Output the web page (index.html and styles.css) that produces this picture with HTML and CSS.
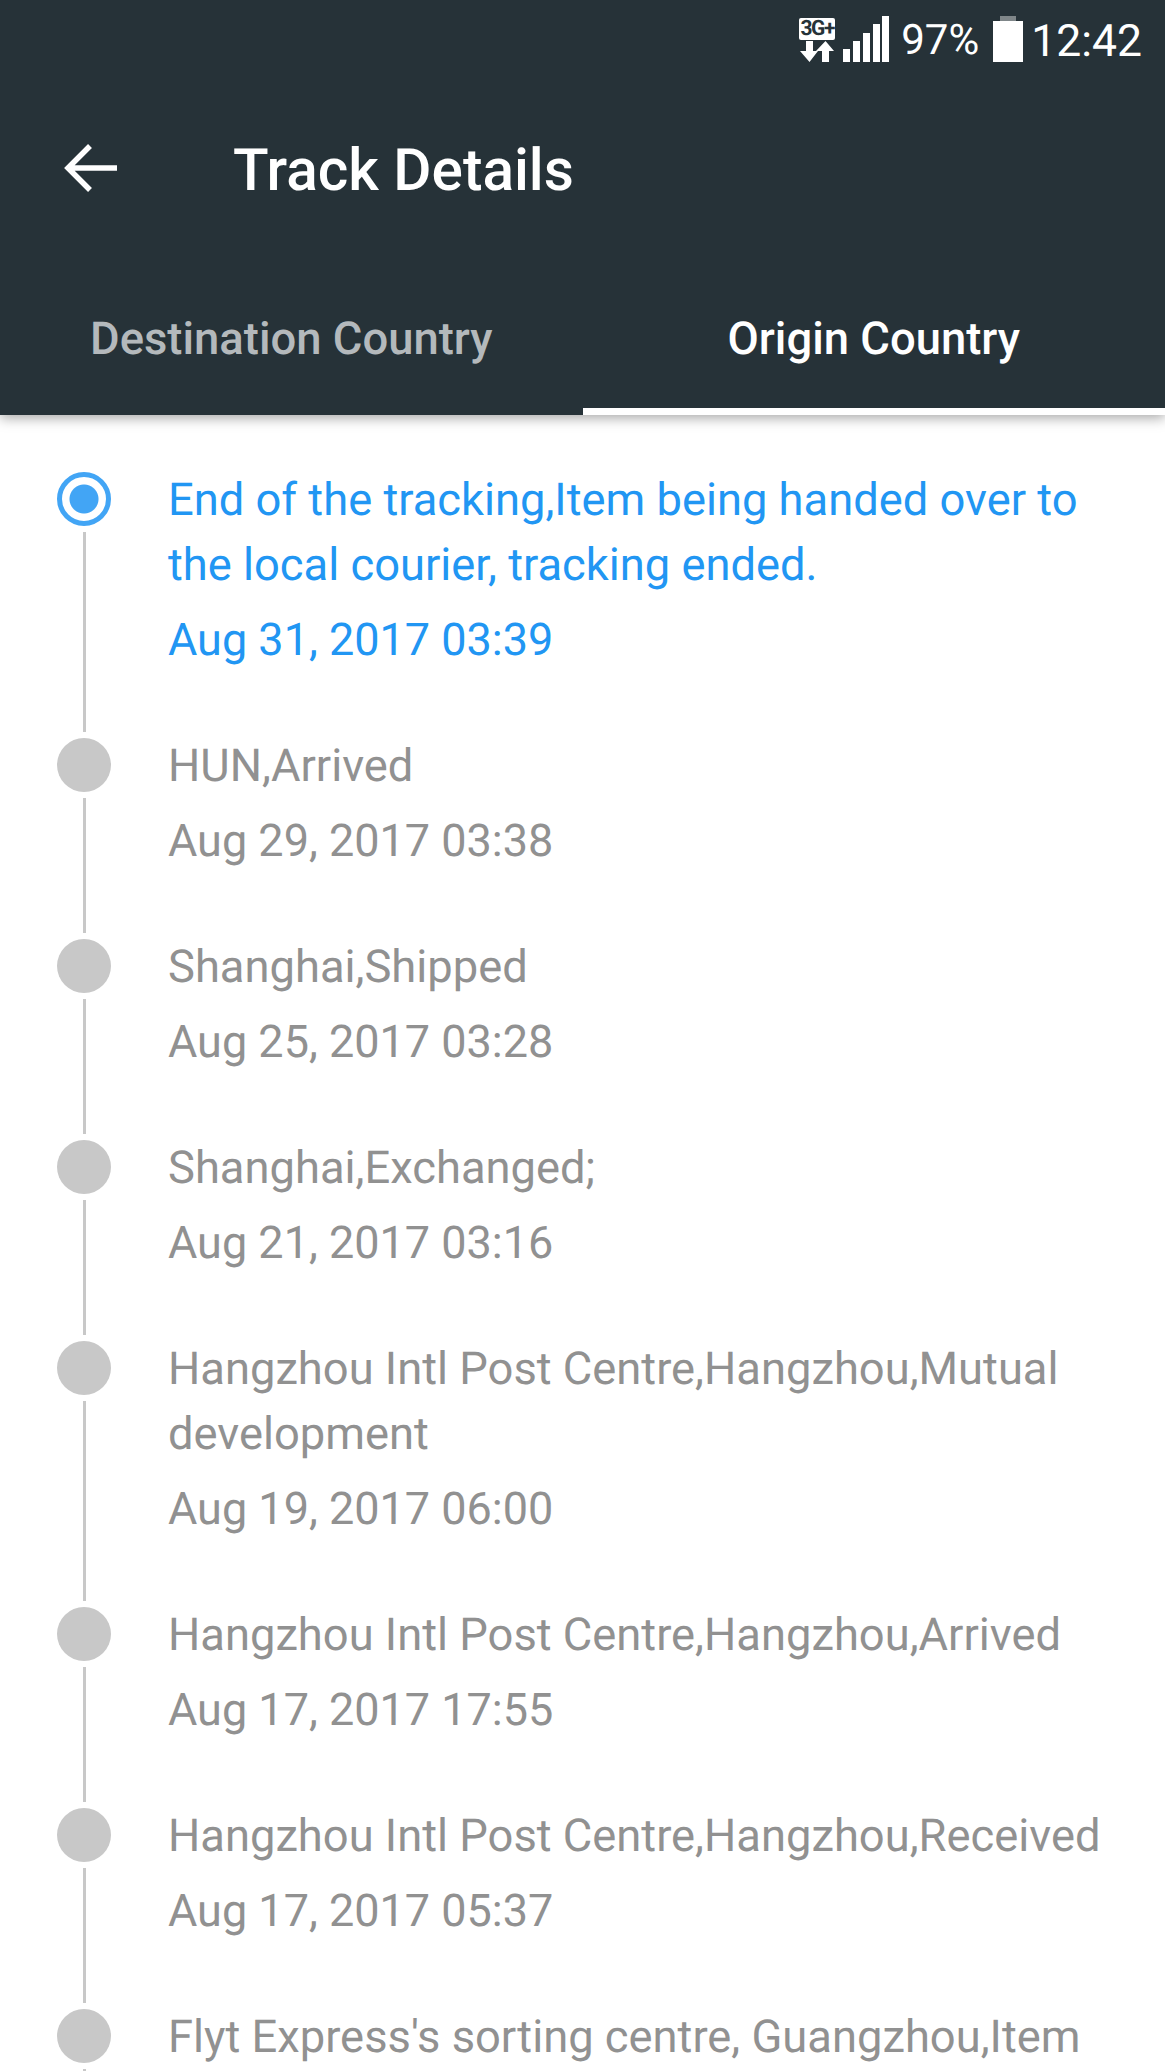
FILE: index.html
```html
<!doctype html>
<html>
  <head>
    <meta charset="UTF-8" />
    <link rel="stylesheet" href="styles.css">
  </head>
  <body>
    <div class="screen">
      <div class="header">
        <div class="status-bar">
          <div class="net-icon">
            <span class="net-badge">3G+</span>
            <svg width="34" height="21" viewBox="0 0 34 21">
              <path d="M6 0h7v10h5L9.500 21 0 10h6z" fill="#fff" />
              <path d="M22 21h7V10h5L25.500 0 16 10h6z" fill="#fff" />
            </svg>
          </div>
          <svg class="signal" width="46" height="46" viewBox="0 0 46 46">
            <rect x="0" y="33" width="7" height="13" fill="#fff" />
            <rect x="10" y="25" width="7" height="21" fill="#fff" />
            <rect x="20" y="17" width="7" height="29" fill="#fff" />
            <rect x="30" y="8" width="7" height="38" fill="#fff" />
            <rect x="39" y="0" width="7" height="46" fill="#fff" />
          </svg>
          <span class="battery-text">97%</span>
          <svg class="battery" width="30" height="46" viewBox="0 0 30 46">
            <rect x="7" y="0" width="16" height="6" fill="#7f8689" />
            <rect x="0" y="5" width="30" height="41" fill="#fff" />
          </svg>
          <span class="clock">12:42</span>
        </div>
        <div class="toolbar">
          <svg class="back" width="54" height="50" viewBox="0 0 54 50">
            <path d="M53 25H5M26 3L4 25 26 47" fill="none" stroke="#fff" stroke-width="5.500" />
          </svg>
          <div class="title">Track Details</div>
        </div>
        <div class="tabs">
          <div class="tab">Destination Country</div>
          <div class="tab active">Origin Country</div>
        </div>
      </div>

      <div class="timeline">
        <div class="row current">
          <div class="rail">
            <div class="dot"></div>
            <div class="line"></div>
          </div>
          <div class="info">
            <div class="what">End of the tracking,Item being handed over to the local courier, tracking ended.</div>
            <div class="when">Aug 31, 2017 03:39</div>
          </div>
        </div>
        <div class="row">
          <div class="rail">
            <div class="dot"></div>
            <div class="line"></div>
          </div>
          <div class="info">
            <div class="what">HUN,Arrived</div>
            <div class="when">Aug 29, 2017 03:38</div>
          </div>
        </div>
        <div class="row">
          <div class="rail">
            <div class="dot"></div>
            <div class="line"></div>
          </div>
          <div class="info">
            <div class="what">Shanghai,Shipped</div>
            <div class="when">Aug 25, 2017 03:28</div>
          </div>
        </div>
        <div class="row">
          <div class="rail">
            <div class="dot"></div>
            <div class="line"></div>
          </div>
          <div class="info">
            <div class="what">Shanghai,Exchanged;</div>
            <div class="when">Aug 21, 2017 03:16</div>
          </div>
        </div>
        <div class="row">
          <div class="rail">
            <div class="dot"></div>
            <div class="line"></div>
          </div>
          <div class="info">
            <div class="what">Hangzhou Intl Post Centre,Hangzhou,Mutual development</div>
            <div class="when">Aug 19, 2017 06:00</div>
          </div>
        </div>
        <div class="row">
          <div class="rail">
            <div class="dot"></div>
            <div class="line"></div>
          </div>
          <div class="info">
            <div class="what">Hangzhou Intl Post Centre,Hangzhou,Arrived</div>
            <div class="when">Aug 17, 2017 17:55</div>
          </div>
        </div>
        <div class="row">
          <div class="rail">
            <div class="dot"></div>
            <div class="line"></div>
          </div>
          <div class="info">
            <div class="what">Hangzhou Intl Post Centre,Hangzhou,Received</div>
            <div class="when">Aug 17, 2017 05:37</div>
          </div>
        </div>
        <div class="row">
          <div class="rail">
            <div class="dot"></div>
            <div class="line"></div>
          </div>
          <div class="info">
            <div class="what">Flyt Express's sorting centre, Guangzhou,Item</div>
          </div>
        </div>
      </div>
    </div>
  </body>
</html>
```

FILE: styles.css
```css
html,
body {
  margin: 0;
  height: 100%;
  background: white;
  font-family: Roboto, sans-serif;
  text-rendering: geometricPrecision;
}
.screen {
  height: 2071px;
  overflow: hidden;
}
.header {
  position: relative;
  z-index: 1;
  background: #263238;
  color: white;
  box-shadow: 0 3px 12px rgba(0, 0, 0, 0.35);
}
.status-bar {
  height: 79px;
  display: flex;
  align-items: flex-start;
  justify-content: flex-end;
  padding-right: 23px;
}
.net-icon {
  width: 36px;
  margin-top: 18px;
  display: flex;
  flex-direction: column;
  align-items: center;
  gap: 1px;
}
.net-badge {
  width: 36px;
  height: 22px;
  background: white;
  border-radius: 2px;
  color: #263238;
  font-size: 21px;
  font-weight: 700;
  line-height: 22px;
  letter-spacing: -1.500px;
  text-align: center;
}
.signal {
  margin: 16px 0 0 8px;
}
.battery-text {
  margin: 17px 0 0 12px;
  font-size: 42px;
  line-height: 48px;
}
.battery {
  margin: 16px 0 0 14px;
}
.clock {
  margin: 16px 0 0 8px;
  font-size: 44.500px;
  line-height: 50px;
}
.toolbar {
  height: 183px;
  display: flex;
  align-items: center;
  padding-left: 64px;
}
.back {
  margin: 0 115px 5px 0;
}
.title {
  font-size: 58.500px;
  font-weight: 500;
}
.tabs {
  display: flex;
  height: 153px;
}
.tab {
  flex: 1;
  display: flex;
  align-items: center;
  justify-content: center;
  padding-top: 2px;
  font-size: 45.400px;
  font-weight: 500;
  color: #b4b9bc;
  box-sizing: border-box;
}
.tab.active {
  color: white;
  border-bottom: 7px solid white;
  padding-top: 9px;
}
.timeline {
  padding: 52px 0 0 57px;
}
.row {
  display: flex;
}
.rail {
  width: 54px;
  margin-right: 57px;
  display: flex;
  flex-direction: column;
  align-items: center;
  padding-top: 5px;
  flex: none;
}
.dot {
  width: 54px;
  height: 54px;
  border-radius: 50%;
  background: #c8c8c8;
  box-sizing: border-box;
}
.line {
  flex: 1;
  width: 3px;
  margin: 6px 0 1px;
  background: #c8c8c8;
}
.row:last-child .line {
  min-height: 40px;
}
.info {
  padding: 1px 0 61px;
  width: 945px;
  font-size: 45.300px;
  line-height: 65px;
  color: #919191;
}
.when {
  margin-top: 9px;
  font-size: 45px;
}
.current .info {
  color: #2196f3;
}
.current .dot {
  border: 5px solid #42a5f5;
  background: radial-gradient(circle, #42a5f5 0, #42a5f5 14px, white 15px);
}
```
